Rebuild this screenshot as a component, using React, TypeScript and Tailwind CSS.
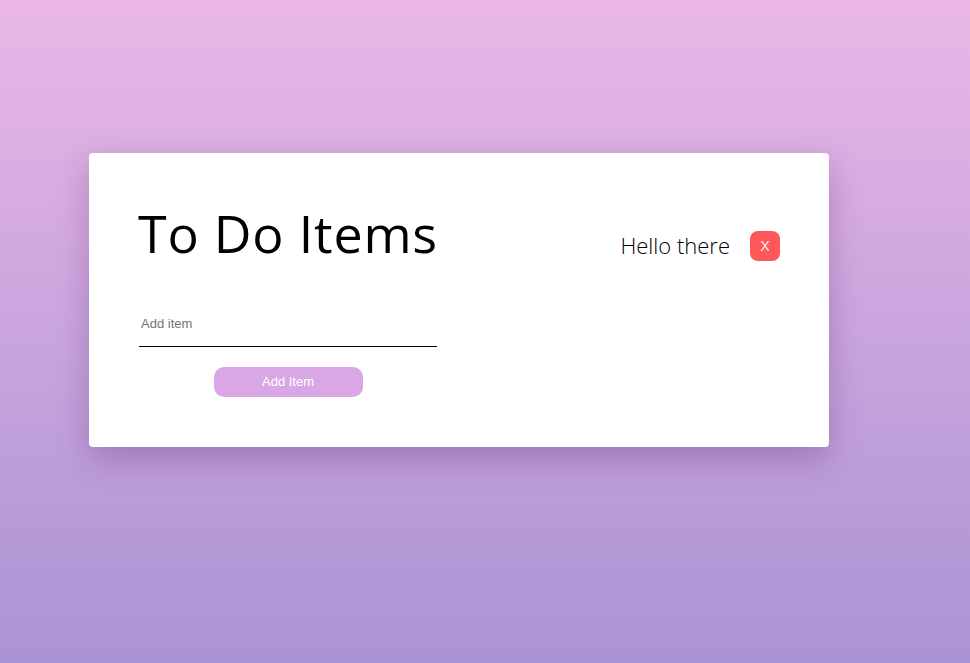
import React, { useState } from 'react';

export default function App() {
  const [item, setItem] = useState('');

  return (
    <div className="min-h-[663px] w-full bg-linear-to-b from-[#eab7e7] to-[#aa93d4] pt-[153px] pl-[89px]">
      {/* Card */}
      <div className="w-[740px] h-[294px] bg-white rounded-[4px] shadow-[0_12px_32px_rgba(80,20,90,0.28)] flex justify-between px-[49px] pt-[48px]">
        <div className="w-[298px] flex flex-col">
          <h1 className="text-[52px] leading-[64px] text-black font-['Open_Sans',sans-serif] tracking-[0.8px] whitespace-nowrap">
            To Do Items
          </h1>
          <input
            value={item}
            onChange={(e) => setItem(e.target.value)}
            placeholder="Add item"
            className="mt-[36px] ml-[1px] w-full h-[46px] px-[2px] border-b border-black text-[13px] font-['Liberation_Sans',Arial,sans-serif] placeholder:text-[#757575] outline-none"
          />
          <button className="mt-[20px] self-center ml-[2px] w-[149px] h-[30px] rounded-[10px] bg-[#d9a7e5] text-white text-[13px] font-['Liberation_Sans',Arial,sans-serif]">
            Add Item
          </button>
        </div>
        <div className="flex items-center gap-[20px] self-start mt-[28px]">
          <span className="text-[22px] font-light text-black font-['Open_Sans',sans-serif]">Hello there</span>
          <button className="w-[30px] h-[30px] rounded-[8px] bg-[#ff585b] text-white text-[15px] font-['Open_Sans',sans-serif] flex items-center justify-center">
            X
          </button>
        </div>
      </div>
    </div>
  );
}
